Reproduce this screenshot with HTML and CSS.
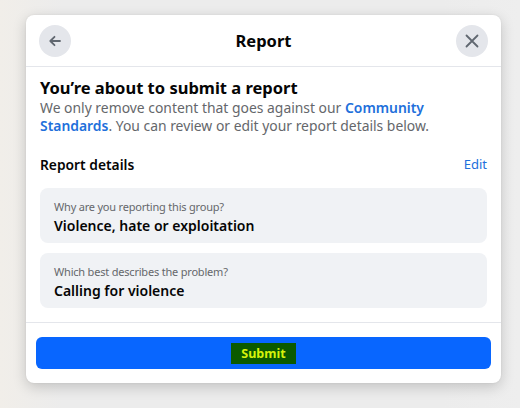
FILE: index.html
```html
<!DOCTYPE html>
<html>
<head>
<meta charset="utf-8">
<link rel="stylesheet" href="styles.css">
</head>
<body>
<div class="page">
  <div class="dialog">
    <div class="header">
      <button class="circle" aria-label="Back">
        <svg width="16" height="16" viewBox="0 0 16 16"><path d="M13 8H3.5M7.5 3.8 3.3 8l4.2 4.2" fill="none" stroke="#606770" stroke-width="1.8" stroke-linecap="round" stroke-linejoin="round"/></svg>
      </button>
      <div class="title">Report</div>
      <button class="circle" aria-label="Close">
        <svg width="16" height="16" viewBox="0 0 16 16"><path d="M2.5 2.5l11 11M13.5 2.5l-11 11" fill="none" stroke="#606770" stroke-width="1.8" stroke-linecap="round"/></svg>
      </button>
    </div>
    <div class="body">
      <h2 class="heading">You’re about to submit a report</h2>
      <p class="desc">We only remove content that goes against our <a class="link">Community Standards</a>. You can review or edit your report details below.</p>
      <div class="details-head">
        <span class="details-title">Report details</span>
        <a class="edit">Edit</a>
      </div>
      <div class="cards">
        <div class="card">
          <div class="label">Why are you reporting this group?</div>
          <div class="value">Violence, hate or exploitation</div>
        </div>
        <div class="card">
          <div class="label">Which best describes the problem?</div>
          <div class="value">Calling for violence</div>
        </div>
      </div>
    </div>
    <div class="footer">
      <button class="submit"><span class="hl">Submit</span></button>
    </div>
  </div>
</div>
</body>
</html>
```
FILE: styles.css
```css
* { box-sizing: border-box; }
html, body { margin: 0; padding: 0; }
body {
  width: 520px;
  height: 408px;
  overflow: hidden;
  font-family: "Noto Sans", "Open Sans", sans-serif;
  background: linear-gradient(90deg, #f1eee9 0%, #ececec 12%, #ececec 85%, #eeeeee 100%);
}
.page {
  padding: 15px 19px 0 26px;
}
.dialog {
  width: 475px;
  height: 368px;
  background: #fff;
  border-radius: 8px;
  box-shadow: 0 4px 14px rgba(0,0,0,0.18), 0 0 2px rgba(0,0,0,0.08);
  display: flex;
  flex-direction: column;
}
.header {
  height: 52px;
  display: flex;
  align-items: center;
  justify-content: space-between;
  padding: 0 13px 0 13px;
  border-bottom: 1px solid #e4e6eb;
}
.circle {
  width: 32px;
  height: 32px;
  border-radius: 50%;
  border: none;
  background: #e4e6eb;
  display: flex;
  align-items: center;
  justify-content: center;
  padding: 0;
}
.title {
  font-size: 16.5px;
  font-weight: 700;
  color: #050505;
}
.body {
  padding: 10px 14px 0 14px;
  flex: 1;
  border-bottom: 1px solid #e4e6eb;
}
.heading {
  margin: 0;
  font-size: 16.5px;
  font-weight: 700;
  color: #050505;
  line-height: 22px;
}
.desc {
  margin: 0;
  font-size: 13.9px;
  line-height: 18px;
  color: #65676b;
}
.link {
  color: #216fdb;
  font-weight: 600;
}
.edit {
  color: #216fdb;
  font-weight: 400;
  font-size: 13px;
}
.details-head {
  display: flex;
  justify-content: space-between;
  align-items: center;
  margin-top: 19px;
  height: 20px;
}
.details-title {
  font-size: 13.8px;
  font-weight: 600;
  color: #050505;
}
.cards {
  margin-top: 14px;
  display: flex;
  flex-direction: column;
  gap: 10px;
}
.card {
  background: #f0f2f5;
  border-radius: 8px;
  height: 55px;
  padding: 11px 14px 0 14px;
}
.label {
  font-size: 11px;
  letter-spacing: -0.2px;
  line-height: 16px;
  color: #65676b;
}
.value {
  font-size: 14px;
  line-height: 21px;
  font-weight: 600;
  color: #050505;
}
.footer {
  height: 60px;
  padding: 14px 10px 0 10px;
}
.submit {
  width: 455px;
  height: 32px;
  border: none;
  border-radius: 6px;
  background: #0866ff;
  display: flex;
  align-items: center;
  justify-content: center;
  padding: 0;
  font-family: inherit;
}
.hl {
  background: #0b5a00;
  color: #d7f20b;
  font-size: 12.5px;
  font-weight: 700;
  padding: 1px 10px;
  line-height: 19px;
}
```
